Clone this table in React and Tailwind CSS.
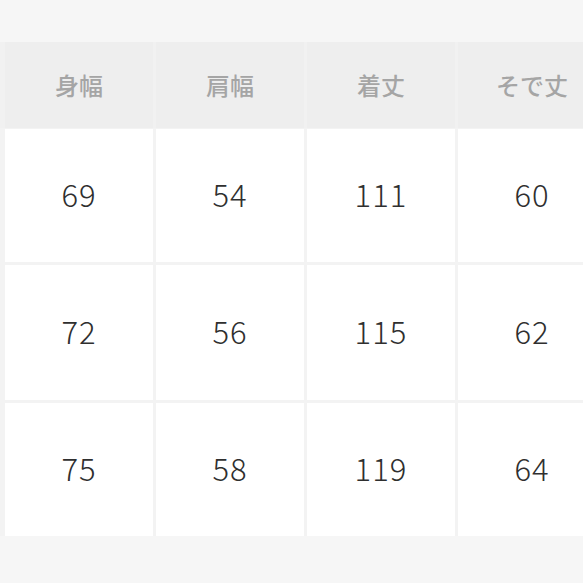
export default function App() {
  const headers = ["身幅", "肩幅", "着丈", "そで丈"];
  const rows = [
    ["69", "54", "111", "60"],
    ["72", "56", "115", "62"],
    ["75", "58", "119", "64"],
  ];
  return (
    <div className="w-[583px] h-[583px] overflow-hidden bg-[#f6f6f6] pt-[42px]" style={{ fontFamily: '"Noto Sans CJK JP", "Noto Sans", sans-serif' }}>
      <div className="w-[610px] bg-[#f1f1f1] pl-[5px] grid grid-cols-[148px_148px_148px_148px] gap-x-[3px] h-[86px]">
        {headers.map((h) => (
          <div key={h} className="bg-[#eeeeee] flex items-center justify-center text-[24px] font-medium text-[#a5a5a5]">
            {h}
          </div>
        ))}
      </div>
      <div className="w-[610px] bg-[#f3f3f3] pl-[5px] pt-[1px] grid grid-cols-[148px_148px_148px_148px] grid-rows-[133px_135px_133px] gap-[3px]">
        {rows.flat().map((v, i) => (
          <div key={i} className="bg-white flex items-center justify-center pb-[3px] text-[31px] font-light text-[#2f2f2f] tracking-[1px]">
            {v}
          </div>
        ))}
      </div>
    </div>
  );
}
